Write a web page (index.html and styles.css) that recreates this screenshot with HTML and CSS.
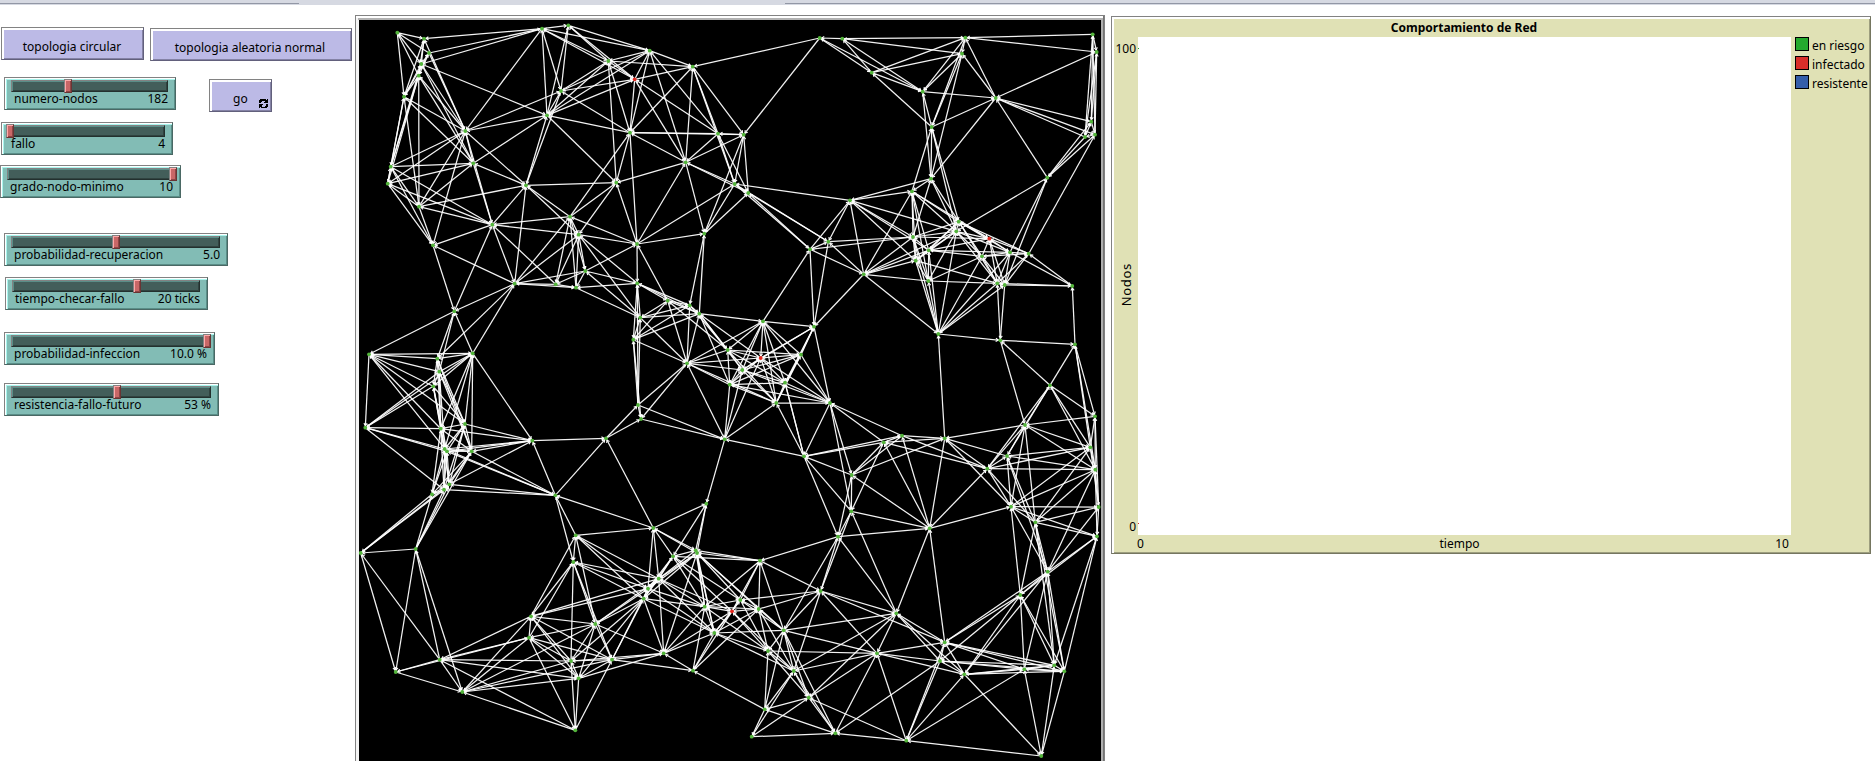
FILE: index.html
```html
<!DOCTYPE html>
<html lang="es">
<head>
<meta charset="utf-8">
<title>Comportamiento de Red</title>
<link rel="stylesheet" href="styles.css">
</head>
<body>
<div class="topbar"><span class="edge edge-left"></span><span class="edge edge-right"></span></div>
<main class="interface">
  <section class="controls">
    <div class="setup">
      <button class="btn btn-circular"><span>topologia circular</span></button>
      <button class="btn btn-random"><span>topologia aleatoria normal</span></button>
    </div>
    <div class="run">
      <div class="sliders">
        <div class="slider s-nodos"><div class="track"><i class="thumb" style="margin-left:52px"></i></div><div class="cap"><span>numero-nodos</span><span>182</span></div></div>
        <div class="slider s-fallo"><div class="track"><i class="thumb" style="margin-left:-3px"></i></div><div class="cap"><span>fallo</span><span>4</span></div></div>
        <div class="slider s-grado"><div class="track"><i class="thumb" style="margin-left:161px"></i></div><div class="cap"><span>grado-nodo-minimo</span><span>10</span></div></div>
        <div class="slider s-recup"><div class="track"><i class="thumb" style="margin-left:100px"></i></div><div class="cap"><span>probabilidad-recuperacion</span><span>5.0</span></div></div>
        <div class="slider s-tiempo"><div class="track"><i class="thumb" style="margin-left:120px"></i></div><div class="cap"><span>tiempo-checar-fallo</span><span>20 ticks</span></div></div>
        <div class="slider s-infec"><div class="track"><i class="thumb" style="margin-left:191px"></i></div><div class="cap"><span>probabilidad-infeccion</span><span>10.0 %</span></div></div>
        <div class="slider s-resist"><div class="track"><i class="thumb" style="margin-left:101px"></i></div><div class="cap"><span>resistencia-fallo-futuro</span><span>53 %</span></div></div>
      </div>
      <button class="btn btn-go"><span>go</span>
        <svg class="loop" width="9" height="10" viewBox="0 0 9 10" shape-rendering="crispEdges"><path d="M1 0h6v1h1V0h1v4H5V3h1V2H3v1H2v1H0V1h1zM0 5h4v1H3v2h3V7h1V5h2v3H8v1H2V8H1v1H0z"/></svg>
      </button>
    </div>
  </section>
  <section class="view"><svg class="world" viewBox="359 20 742 741" width="742" height="741"></svg></section>
  <section class="plot">
    <h1 class="plot-title">Comportamiento de Red</h1>
    <div class="plot-body">
      <div class="y-axis"><span class="y-max">100</span><span class="y-name">Nodos</span><span class="y-min">0</span></div>
      <div class="canvas"><i class="dot green"></i><i class="dot red"></i></div>
      <ul class="legend">
        <li><i class="key green"></i>en riesgo</li>
        <li><i class="key red"></i>infectado</li>
        <li><i class="key blue"></i>resistente</li>
      </ul>
    </div>
    <div class="x-axis"><span>0</span><span>tiempo</span><span>10</span></div>
  </section>
</main>
<script src="network.js"></script>
</body>
</html>
```
FILE: styles.css
```css
* { box-sizing: border-box; }
body { margin: 0; width: 1875px; height: 761px; overflow: hidden; background: #fff; color: #000; font: 12px/16px "Noto Sans", "Open Sans", sans-serif; }
.topbar { display: flex; justify-content: space-between; height: 5px; padding-top: 3px; background: #d6d9e2; }
.edge { height: 1px; background: #9297a5; }
.edge-left { width: 299px; }
.edge-right { width: 1090px; }
.interface { display: flex; align-items: flex-start; height: 756px; }
.controls { width: 355px; flex: none; padding-top: 22px; }
.setup { display: flex; align-items: flex-start; padding-left: 1px; gap: 6px; }
.btn { font: inherit; color: #000; background: #bcbae6; padding: 7px 1px 0 0; margin: 0; height: 33px; border: 1px solid #828282; border-right-color: #62607c; border-bottom-color: #62607c; box-shadow: inset 2px 2px 0 #fff, inset -1px -1px 0 #8482a5; display: flex; align-items: center; justify-content: center; white-space: nowrap; }
.btn-circular { width: 143px; }
.btn-random { width: 202px; margin-top: 1px; padding-right: 2px; }
.run { display: flex; align-items: flex-start; padding-top: 16px; }
.sliders { width: 209px; flex: none; }
.btn-go { width: 63px; margin-top: 2px; padding: 6px 3px 0 23px; justify-content: space-between; }
.loop { margin-top: 10px; display: block; }
.slider { height: 33px; background: #82bcb5; border: 1px solid #828282; border-right-color: #4a6864; border-bottom-color: #4a6864; box-shadow: inset 1px 1px 0 #fff, inset 2px 2px 0 #a8f5ed, inset -1px -1px 0 #5a8e88; padding: 2px 7px 0 6px; }
.s-nodos { width: 172px; margin-left: 4px; }
.s-fallo { width: 172px; margin: 12px 0 0 1px; }
.s-grado { width: 181px; margin: 10px 0 0 0; }
.s-recup { width: 224px; margin: 35px 0 0 4px; }
.s-tiempo { width: 203px; margin: 11px 0 0 5px; }
.s-infec { width: 211px; margin: 22px 0 0 4px; }
.s-resist { width: 215px; margin: 18px 0 0 4px; }
.track { height: 12px; background: #435e5a; border: 1px solid #828282; border-right-color: #23302e; border-bottom-color: #23302e; box-shadow: inset 1px 1px 0 #5a8e88, inset -1px -1px 0 #304340; }
.thumb { display: block; width: 8px; height: 14px; margin-top: -2px; background: #c96767; border: 1px solid #828282; border-right-color: #6a3434; border-bottom-color: #6a3434; box-shadow: inset 1px 1px 0 #ffa9a9, inset -1px -1px 0 #8d4646; }
.cap { display: flex; justify-content: space-between; padding: 0 0 0 3px; margin-top: -1px; white-space: nowrap; }
.view { flex: none; width: 750px; height: 746px; margin-top: 10px; padding: 2px 1px 0 1px; border: 1px solid #828282; border-bottom: 0; background: linear-gradient(90deg, #f4f4f4 0 50%, #b0b0b0 50%); display: flex; flex-direction: column; box-shadow: inset -1px 0 0 #757575, inset 0 2px 0 #fff; }
.view::before { content: ""; height: 2px; flex: none; background: #b2b2b2; margin: 0 1px; }
.world { display: block; flex: none; margin-left: 2px; background: #000; }
.link { stroke: #fff; stroke-width: 1.25; stroke-opacity: .95; fill: none; }
.head { stroke: #fff; stroke-width: 1.1; fill: none; }
.node { fill: #53b53b; }
.sick { fill: #e3291f; }
.plot { flex: none; width: 760px; height: 538px; margin: 11px 0 0 6px; background: #e0e1b5; border: 1px solid #828282; border-right-color: #757660; border-bottom-color: #757660; box-shadow: inset 2px 2px 0 #fff, inset -1px -1px 0 #9d9e7f; }
.plot-title { margin: 0; height: 20px; padding: 2px 0 0; width: 704px; text-align: center; font-size: 12px; line-height: 18px; }
.plot-body { display: flex; height: 498px; }
.y-axis { width: 26px; height: 498px; display: flex; flex-direction: column; justify-content: space-between; align-items: flex-end; padding: 4px 2px 0; }
.y-name { writing-mode: vertical-rl; transform: rotate(180deg); font-size: 13px; letter-spacing: .7px; margin: 0 2px 7px 0; line-height: 16px; }
.canvas { width: 653px; background: #fff; padding: 11px 0 11px; display: flex; flex-direction: column; justify-content: space-between; }
.dot { width: 1px; height: 1px; }
.green { background: #24aa2e; }
.red { background: #d92f2a; }
.blue { background: #345ea9; }
.legend { list-style: none; margin: 0; padding: 0 0 0 4px; }
.legend li { display: flex; height: 19px; gap: 3px; line-height: 18px; white-space: nowrap; }
.key { width: 14px; height: 14px; border: 1px solid #000; }
.x-axis { display: flex; justify-content: space-between; width: 653px; margin-left: 25px; padding: 0 1px 0 0; line-height: 17px; }
```
FILE: network.js
```javascript
// Node positions, grouped by map sector; each sector lists x,y pairs.
const sectors = {
a:"397.3,32.7 424,38.7 429,53 421.3,64 418.7,75.7 404,96.7 465.3,131 473.3,163.3 390.7,166.7 387.7,183.7 419,206.7 433,245.3 492.3,224.7 526,185.3 542,28.7 568.3,25.3 561,91 547,115.3 570,216.7 578.7,234.7",
b:"608.3,61 649.7,50.7 692.7,66.7 634.7,79.3 630,132.7 718,133.7 743.7,134.7 685.7,162.3 616.3,182.7 734.7,184 748.3,193 637,244 704.3,233.7 819.7,38 842.3,38.7 850,200.3 828.3,241.7 810,249.3",
c:"965.3,37.7 962,53.7 871.7,72.7 922.7,91.7 995.7,98 931.7,127 931,178.7 912,191.3 1092.7,34.3 1096.7,52 1091.3,121.7 1085,137 1095,134.7 1047.3,177.7 958.7,221.7 956.3,231.3 989.3,238.7 913,237 928.7,250.3 982,256.3 1010,252.3 1028.7,253.7",
d:"514.7,283.7 555.7,284.3 576,287.7 585.3,271 454.3,311.3 369,354.3 472.7,353.3 437.3,358.7 439.3,371.7 433.3,386.3 365.3,427.7 440.7,428.7 465,424 444.7,449 447,451.3 471.7,451.3 449.3,484.3 444,489.7 432,494.3 532.3,440.7 555.3,495.3",
e:"637.3,283.3 667.7,300.7 689.7,305.3 699.3,313.7 640.3,317.7 633.3,339.7 687,363.3 727.7,350 742.3,370 729.7,384.7 760.7,358 763,321.3 814,326.7 801,354.7 785,382.7 776.3,403 830,403 638,405 641,419 606,438.3 724.7,439.3 804,456.3 851.7,475 706.3,503.7",
f:"863.7,274.3 915.7,260.7 928.3,281 997.3,283.3 1004.7,285 1072.3,286 938.3,334 1000.3,340.3 1075,344.3 1050,385.3 1025,425 1095,416.3 1090.3,447.3 1095.3,469.7 1007,456 987.3,468.7 1011,506.7 1098.7,507 902,435.7 883.7,442.3 944.7,438.3",
g:"360.7,553 415.7,549 395.7,672 439.7,659.7 462.3,692 531,616.3 529,637.7 575.7,535.3 573.3,562 595.3,624 571,661 578.7,678.3 575.3,730.3",
h:"653.3,528 673,556.3 695.7,550.3 697,553 658.7,578.7 648,588.7 643.7,598.7 612,659.7 663.7,653.3 693,670.7 714.3,633 704.7,606.7 732,611.3 740.3,600 758.7,609 760,560.7 783.7,630.3 768,651 793.7,671 808.7,697.7 764.7,709.3 751.7,736.7 835.3,733.3 820.7,591 838,536.7 851.3,511.3",
i:"929.7,528.3 896.3,613.3 877,653.3 944.7,642.3 940,661 964.3,674.3 1020.3,595 1047.7,571.7 1035.3,522.3 1097,536.3 1024.3,669.3 1054.3,665.3 1064.3,671.3 906.3,740.7 1041.3,756"
};
// Links: "node:neighbour,neighbour"
const links = `a1:a2,a3,a4,a5,a6 a2:a15,a4,a5,a6,a7 a3:a15,a4,a5,a6,a7 a4:a15,a5,a6,a7,a8,a18,a9 a5:a6,a7,a8,a9,a10,a11
a6:a9,a10,a7,a8,a11 a7:a15,a17,a18,a8,a9,a10,a11,a12,a13,a14 a8:a9,a10,a11,a13,a14,a18 a9:a10,a11,a12,a13 a10:a11,a12,a13
a11:a12,a13,a14 a12:a13,d5,d1 a13:a14,a19,a20,d5,d1,d2 a14:a18,a17,b9,a19,a20,d1 a15:a16,b2,b1,b4,a17,a18 a16:b2,b1,b4,a17,a18
a17:a18,b1,b2,b4,b5 a18:b1,b2,b4,b5,b9 b1:b2,b3,b4,b5,b9 b2:b3,b4,b5,b6,b8 b3:b4,b5,b6,b7,b8,b10,b14 b4:b5,b6,b8
b5:b6,b7,b8,b9,a19,b12 b6:b7,b8,b10,b11 b7:b8,b10,b11,b13,b14 b8:b9,b10,b11,b12,b13 b9:a19,a20,b12 b10:b11,b12,b13,b16,b17
b11:b13,b17,b18 b12:a19,a20,b13,d4,e1,e2 b13:e3,e4 a19:a20,d1,d2,d3,d4 a20:d1,d2,d3,d4,e1,e5 b14:b15,c3,c4 b15:c1,c3,c4,c2
b16:b17,b18,c8,c7,c18,c19,f2,f1,c16 b17:b18,c18,f1,e13 b18:c18,f1,e12,e13,b10 c1:c2,c3,c4,c5,c6,c9,c10 c2:c3,c4,c5,c6,c7
c3:c4,c6 c4:c5,c6,c7 c5:c6,c7,c10,c11,c12,c13,c14 c6:c7,c8,c15,c16 c7:c8,c15,c16,c18 c8:c15,c16,c18,c19,f2,f1,c17,f3
c9:c10,c11,c12,c13 c10:c11,c13,c12 c11:c12,c13,c14 c12:c14,c13 c13:c14,c22 c14:c16,c21,f5
c15:c16,c17,c18,c19,c20,c21,c22,f2,f4 c16:c17,c18,c19,c20,c21,f2,f3,f4,f1,f7 c17:c18,c20,c21,c22,f4,f5,c19 c18:c19,f2,f3,f1,f7
c19:c20,f2,f3,f7,f1,c21 c20:c21,c22,f4,f5,f3,f7 c21:c22,f4,f5,f7,f6 c22:f4,f5,f6 f1:f2,f3,f7 f2:f3,f7,f4 f3:f4,f7
f4:f5,f6,f7,f8 f5:f6,f7,f8 f6:f9 f7:f8,f21 f8:f9,f10,f11 f9:f10,f12,f13,f14 f10:f11,f12,f13,f14,f15,f16
f11:f12,f13,f14,f15,f16,f17,i9,f21 f12:f13,f14,f18 f13:f14,f15,f16,f17,f18,i9 f14:f15,f16,f17,f18,i9,i10,i8
f15:f16,f17,i9,f21,i8 f16:f17,i9,f20,f19,f21,i1 f17:f18,i9,i8,i1,i10,i7,f21 f18:i9,i10,i8 i9:i10,i8,i7,i12,i13
f19:f20,f21,e22,e23,i1,e17 f20:f21,e22,e23,h26,i1,e17 f21:e23,i1 e23:h26,h25,i1,e22,e17 e17:h26 e22:h26,h25,e17,e16,e15,e21
d1:d2,d3,d4,d5,d7,d8 d2:d4,d3 d3:d4,e5,e1 d4:e1,e5 d5:d6,d7,d8,d9 d6:d7,d8,d9,d10,d11,d12,d13,d15
d7:d8,d9,d10,d11,d12,d13,d14,d16,d20 d8:d9,d10,d12,d13,d16 d9:d10,d12,d13,d14,d16,d11 d10:d11,d12,d13,d14,d15
d11:d12,d14,d15,d18 d12:d13,d14,d16,d17,d18,d19,d20 d13:d14,d15,d16,d17,d20,d18 d14:d16,d17,d18,d19,d20,d21
d15:d16,d17,d20,d21,d18,d19 d16:d17,d18,d19,d20,d21,g2 d17:d18,d19,d20,d21,g1,g2 d18:d19,d21,g1,g2 d19:g1,g2 d20:e20,d21
d21:e20,g8,g9,h1 e1:e2,e3,e4,e5,e6,e18 e2:e3,e4,e5,e6,e7,e8 e3:e4,e5,e6,e7,e8 e4:e5,e6,e7,e8,e9,e10,e11,e12 e5:e6,e7,e18
e6:e7,e18,e19 e7:e8,e9,e10,e12,e11,e16,e18,e19,e21 e8:e9,e10,e11,e12,e14,e15,e16 e9:e10,e11,e12,e13,e14,e15,e16,e17,e21
e10:e11,e12,e14,e15,e16,e17,e21 e11:e12,e13,e14,e15,e16,e17,e21 e12:e13,e14,e15,e16,e17 e13:e14,e15,e16,e17,f1
e14:e15,e16,e17 e15:e16,e17,e22 e16:e17,e21 e18:e19,e20,e21 e19:e20,e21 e20:h1 e21:e24 e24:h1,h2,h3,h4
g1:g2,g3,g4 g2:g3,g4,g5 g3:g4,g5,g7 g4:g5,g6,g7,g11,g12,g13 g5:g6,g7,g10,g11,g12,g13,h8
g6:g7,g8,g9,g10,g11,g12,h8,h6,h5 g7:g9,g10,g11,g12,g13,h8 g8:g9,g10,h1,h5,h6,h7 g9:g10,h5,h6,h7,h8,g11
g10:g11,g12,h8,h5,h6,h7,h9 g11:g12,g13,h8,h7,h9 g12:g13,h8,h9,h7 g13:h8
h1:h2,h3,h4,h5,h6 h2:h3,h5,h6,h7,h12,h13,h14,h16 h3:h4,h16,h5,h12,h11 h4:h16,h5,h6,h7,h12,h11,h14,h15,h17,h9
h5:h6,h7,h12,h13,h9,h11 h6:h7,h12,h8,h11 h7:h8,h9,h12,h11 h8:h9,h10 h9:h10,h11,h12,h13 h10:h11,h12,h13,h15,h21
h11:h12,h13,h15,h17,h18,h19,h14 h12:h13,h14,h16,h15,h18 h13:h14,h15,h16,h18,h19 h14:h15,h16,h17,h18,h24 h15:h16,h17,h18,h19,h24
h16:h17,h24,h25 h17:h18,h19,h20,h21,h24,h25,i2,i3,h23 h18:h19,h20,h21,i3 h19:h20,h21,h22,h23,h24,i2,i3
h20:h21,h22,h23,i2,i3,i14 h21:h22,h23 h22:h23 h23:i14,i3,i5 h24:h25,h26,i2,i3,i4 h25:h26,i1,i2 h26:i1,i2
i1:i2,i4 i2:i3,i4,i5,i6 i3:i4,i5,i6,i14 i4:i5,i6,i7,i8,i11,i12,i13,i14 i5:i6,i7,i11,i12,i14,i13
i6:i7,i8,i11,i12,i13,i14,i15 i7:i8,i10,i11,i12,i13 i8:i10,i11,i12,i13 i10:i12,i13 i11:i12,i13,i14,i15 i12:i13,i15 i13:i15 i14:i15`;
const infected = new Set(["b4", "c17", "e11", "h13"]);

const nodes = {};
for (const [s, list] of Object.entries(sectors)) {
  list.split(" ").forEach((p, n) => { nodes[s + (n + 1)] = p.split(",").map(Number); });
}
let lines = "", heads = "", dots = "", count = 0;
for (const group of links.split(/\s+/)) {
  const [from, list] = group.split(":");
  for (const to of list.split(",")) {
    let p = nodes[from], q = nodes[to];
    if (count++ % 2) [p, q] = [q, p];
    lines += `<path d="M${p}L${q}"/>`;
    const len = Math.hypot(q[0] - p[0], q[1] - p[1]);
    const ux = (q[0] - p[0]) / len, uy = (q[1] - p[1]) / len;
    const bx = q[0] - ux * 4.5, by = q[1] - uy * 4.5;
    heads += `M${bx - uy * 1.6} ${by + ux * 1.6}L${q[0] - ux * 2} ${q[1] - uy * 2}L${bx + uy * 1.6} ${by - ux * 1.6}`;
  }
}
for (const [id, [x, y]] of Object.entries(nodes)) {
  dots += `<circle class="${infected.has(id) ? "sick" : "node"}" cx="${x}" cy="${y}" r="1.9"/>`;
}
document.querySelector(".world").innerHTML = `<g class="link">${lines}</g><path class="head" d="${heads}"/>${dots}`;
```
